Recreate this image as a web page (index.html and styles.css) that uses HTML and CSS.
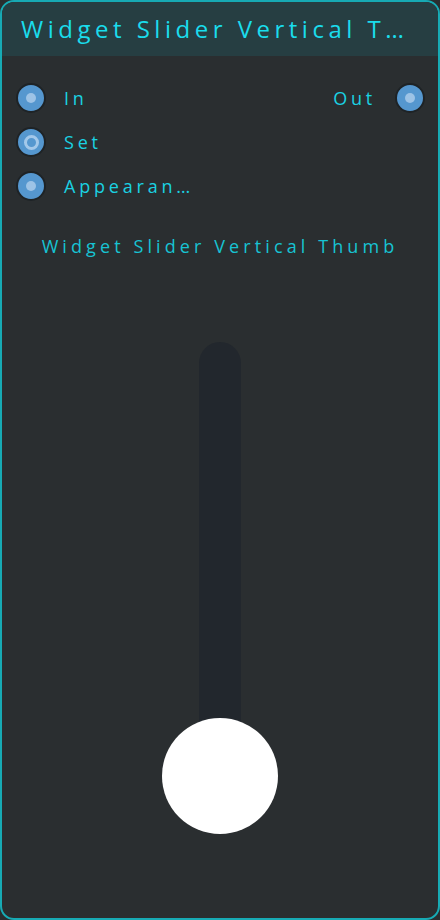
FILE: index.html
```html
<!DOCTYPE html>
<html>
<head>
    <title>Widget Slider Vertical Thumb</title>
    <link rel="stylesheet" href="styles.css">
</head>
<body>
    <div class="node">
        <div class="node-title">Widget Slider Vertical T…</div>

        <div class="ports">
            <div class="port-row">
                <div class="port">
                    <span class="socket"><span class="dot"></span></span>
                    <span class="port-label">In</span>
                </div>
                <div class="port out">
                    <span class="port-label">Out</span>
                    <span class="socket"><span class="dot"></span></span>
                </div>
            </div>
            <div class="port-row">
                <div class="port">
                    <span class="socket"><span class="ring"></span></span>
                    <span class="port-label">Set</span>
                </div>
            </div>
            <div class="port-row">
                <div class="port">
                    <span class="socket"><span class="dot"></span></span>
                    <span class="port-label">Appearan…</span>
                </div>
            </div>
        </div>

        <div class="caption">Widget Slider Vertical Thumb</div>

        <div class="slider">
            <div class="track"></div>
            <div class="thumb"></div>
        </div>
    </div>
</body>
</html>
```

FILE: styles.css
```css
body {
    margin: 0;
    background: #2a2e30;
    font-family: "Open Sans", "DejaVu Sans", sans-serif;
}

.node {
    box-sizing: border-box;
    width: 440px;
    height: 920px;
    border: 2px solid #17aab4;
    border-radius: 14px;
    background: #2a2e30;
    overflow: hidden;
    display: flex;
    flex-direction: column;
}

.node-title {
    height: 54px;
    background: #263e42;
    color: #1adcec;
    font-size: 24px;
    letter-spacing: 4.5px;
    line-height: 54px;
    padding-left: 19px;
    white-space: nowrap;
}

.ports {
    padding: 27px 13px 0 14px;
    display: flex;
    flex-direction: column;
    gap: 14px;
}

.port-row {
    display: flex;
    justify-content: space-between;
    align-items: center;
    height: 30px;
}

.port {
    display: flex;
    align-items: center;
    gap: 18px;
}

.port.out {
    gap: 19px;
}

.port-label {
    color: #1ad2e2;
    font-size: 18px;
    letter-spacing: 3.8px;
}

.socket {
    box-sizing: border-box;
    width: 30px;
    height: 30px;
    border-radius: 50%;
    background: #5597cf;
    border: 2px solid #1e2326;
    display: flex;
    align-items: center;
    justify-content: center;
}

.dot {
    width: 10px;
    height: 10px;
    border-radius: 50%;
    background: #9dc3e6;
}

.ring {
    box-sizing: border-box;
    width: 15px;
    height: 15px;
    border-radius: 50%;
    border: 3px solid #a3c8ea;
}

.caption {
    margin-top: 33px;
    text-align: center;
    color: #17c3d3;
    font-size: 18px;
    letter-spacing: 4.1px;
}

.slider {
    position: relative;
    margin-top: 84px;
    height: 490px;
    display: flex;
    justify-content: center;
}

.track {
    width: 42px;
    height: 420px;
    border-radius: 21px 21px 0 0;
    background: #22272d;
}

/* thumb sits over the lower end of the track */
.thumb {
    position: absolute;
    left: 160px;
    top: 376px;
    width: 116px;
    height: 116px;
    border-radius: 50%;
    background: #ffffff;
}
```
